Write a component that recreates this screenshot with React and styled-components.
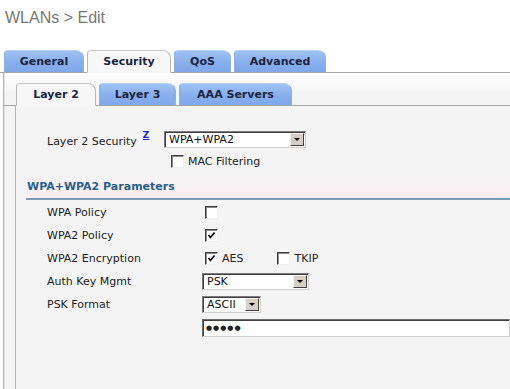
import styled, { createGlobalStyle } from 'styled-components'

const Global = createGlobalStyle`
  html, body {
    margin: 0;
    padding: 0;
    background: #ffffff;
    font-family: 'DejaVu Sans', Verdana, sans-serif;
  }
`

const Page = styled.div`
  width: 510px;
  height: 389px;
  overflow: hidden;
  background: #ffffff;
`

const Title = styled.div`
  font-family: 'Liberation Sans', Arial, sans-serif;
  font-size: 16px;
  color: #777777;
  padding: 9px 0 0 5px;
  height: 41px;
  box-sizing: border-box;
`

const TabBar = styled.div`
  display: flex;
  align-items: flex-end;
  gap: ${p => p.$gap}px;
  height: ${p => p.$height}px;
  padding-left: ${p => p.$left}px;
  border-bottom: 1px solid #a6a6a6;
  box-sizing: border-box;
`

const Tab = styled.div`
  width: ${p => p.$w}px;
  height: ${p => (p.$active ? 23 : 22)}px;
  box-sizing: border-box;
  display: flex;
  align-items: center;
  justify-content: center;
  font-size: 11px;
  font-weight: bold;
  color: #1b2440;
  border-radius: 4px 8px 0 0;
  margin-bottom: ${p => (p.$active ? -1 : 0)}px;
  background: ${p =>
    p.$active
      ? '#f7f7f7'
      : 'linear-gradient(#9fc1f4, #86aeec 60%, #7fa8ea)'};
  border: 1px solid ${p => (p.$active ? '#b8b8b8' : '#8fb0e0')};
  border-top-color: ${p => (p.$active ? '#c8c8c8' : '#b9d1f5')};
  border-bottom: ${p => (p.$active ? '1px solid #f7f7f7' : 'none')};
  position: relative;
  z-index: ${p => (p.$active ? 2 : 1)};
`

const OuterPanel = styled.div`
  margin-left: 3px;
  border-left: 1px solid #b4b4b4;
  box-shadow: inset 1px 0 0 #e2e2e2;
  background: linear-gradient(#ffffff, #f4f4f4 20px);
  padding-top: 10px;
  height: 320px;
`

const InnerPanel = styled.div`
  margin-left: 11px;
  border-left: 1px solid #b4b4b4;
  background: #f4f4f4;
  height: 300px;
  padding-top: 22px;
  box-sizing: border-box;
`

const Row = styled.div`
  display: flex;
  align-items: center;
  height: ${p => p.$h || 23}px;
  font-size: 11px;
  color: #222222;
`

const Label = styled.div`
  width: ${p => p.$w}px;
  padding-left: ${p => p.$pad || 0}px;
  box-sizing: border-box;
  flex-shrink: 0;
`

const Help = styled.sup`
  color: #2222cc;
  font-size: 9px;
  font-weight: bold;
  text-decoration: underline;
  margin-left: 6px;
  position: relative;
  top: -2px;
`

const Select = styled.div`
  width: ${p => p.$w}px;
  height: 17px;
  box-sizing: border-box;
  background: #ffffff;
  border: 1px solid #7a7a7a;
  border-right-color: #d0d0d0;
  border-bottom-color: #d0d0d0;
  box-shadow: inset 1px 1px 0 #404040;
  display: flex;
  align-items: center;
  justify-content: space-between;
  padding-left: 4px;
  font-size: 11px;
  color: #111;
`

const Arrow = styled.span`
  width: 14px;
  height: 13px;
  margin-right: 1px;
  background: #d4d0c8;
  border: 1px solid;
  border-color: #f4f4f4 #404040 #404040 #f4f4f4;
  box-sizing: border-box;
  display: flex;
  align-items: center;
  justify-content: center;

  &::after {
    content: '';
    border-left: 3px solid transparent;
    border-right: 3px solid transparent;
    border-top: 3px solid #000;
  }
`

const Box = styled.span`
  width: 13px;
  height: 13px;
  box-sizing: border-box;
  background: #ffffff;
  border: 1px solid #f0f0f0;
  border-top-color: #404040;
  border-left-color: #404040;
  box-shadow: inset 1px 1px 0 #888;
  display: inline-flex;
  align-items: center;
  justify-content: center;
  flex-shrink: 0;
`

const CheckWrap = styled.div`
  display: flex;
  align-items: center;
  gap: 4px;
  margin-left: ${p => p.$ml || 0}px;
`

const Section = styled.div`
  margin-top: 4px;
  margin-left: 10px;
  height: 23px;
  background: linear-gradient(#f4f4f4, #fcedf3);
  border-bottom: 2px solid #7f9ab3;
  display: flex;
  align-items: center;
  padding-left: 1px;
  font-size: 11px;
  font-weight: bold;
  color: #2c5f86;
`

const Fields = styled.div`
  padding-top: 1px;
`

const Password = styled.div`
  width: 320px;
  height: 18px;
  box-sizing: border-box;
  background: #fff;
  border: 1px solid #d0d0d0;
  border-top-color: #6a6a6a;
  border-left-color: #6a6a6a;
  box-shadow: inset 1px 1px 0 #404040;
  padding-left: 3px;
  font-size: 7px;
  letter-spacing: 1px;
  display: flex;
  align-items: center;
`

function Check({ on }) {
  return (
    <Box>
      {on && (
        <svg width="9" height="9" viewBox="0 0 9 9">
          <path d="M1.5 4 L3.5 6.5 L7.5 1.5" stroke="#000" strokeWidth="1.6" fill="none" />
        </svg>
      )}
    </Box>
  )
}

export default function App() {
  return (
    <Page>
      <Global />
      <Title>WLANs &gt; Edit</Title>
      <TabBar $height={32} $left={4} $gap={3}>
        <Tab $w={80}>General</Tab>
        <Tab $w={84} $active>Security</Tab>
        <Tab $w={57}>QoS</Tab>
        <Tab $w={92}>Advanced</Tab>
      </TabBar>
      <OuterPanel>
        <TabBar $height={23} $left={12} $gap={3}>
          <Tab $w={80} $active>Layer 2</Tab>
          <Tab $w={77}>Layer 3</Tab>
          <Tab $w={113}>AAA Servers</Tab>
        </TabBar>
        <InnerPanel>
          <Row $h={23}>
            <Label $w={148} $pad={31}>
              Layer 2 Security<Help>Z</Help>
            </Label>
            <Select $w={142}>
              WPA+WPA2
              <Arrow />
            </Select>
          </Row>
          <Row $h={20}>
            <Label $w={155} />
            <CheckWrap>
              <Check />
              MAC Filtering
            </CheckWrap>
          </Row>
          <Section>WPA+WPA2 Parameters</Section>
          <Fields>
            <Row>
              <Label $w={189} $pad={31}>WPA Policy</Label>
              <Check />
            </Row>
            <Row>
              <Label $w={189} $pad={31}>WPA2 Policy</Label>
              <Check on />
            </Row>
            <Row>
              <Label $w={189} $pad={31}>WPA2 Encryption</Label>
              <CheckWrap>
                <Check on />
                AES
              </CheckWrap>
              <CheckWrap $ml={34}>
                <Check />
                TKIP
              </CheckWrap>
            </Row>
            <Row>
              <Label $w={186} $pad={31}>Auth Key Mgmt</Label>
              <Select $w={107}>
                PSK
                <Arrow />
              </Select>
            </Row>
            <Row>
              <Label $w={186} $pad={31}>PSK Format</Label>
              <Select $w={59}>
                ASCII
                <Arrow />
              </Select>
            </Row>
            <Row>
              <Label $w={186} />
              <Password>●●●●●</Password>
            </Row>
          </Fields>
        </InnerPanel>
      </OuterPanel>
    </Page>
  )
}
